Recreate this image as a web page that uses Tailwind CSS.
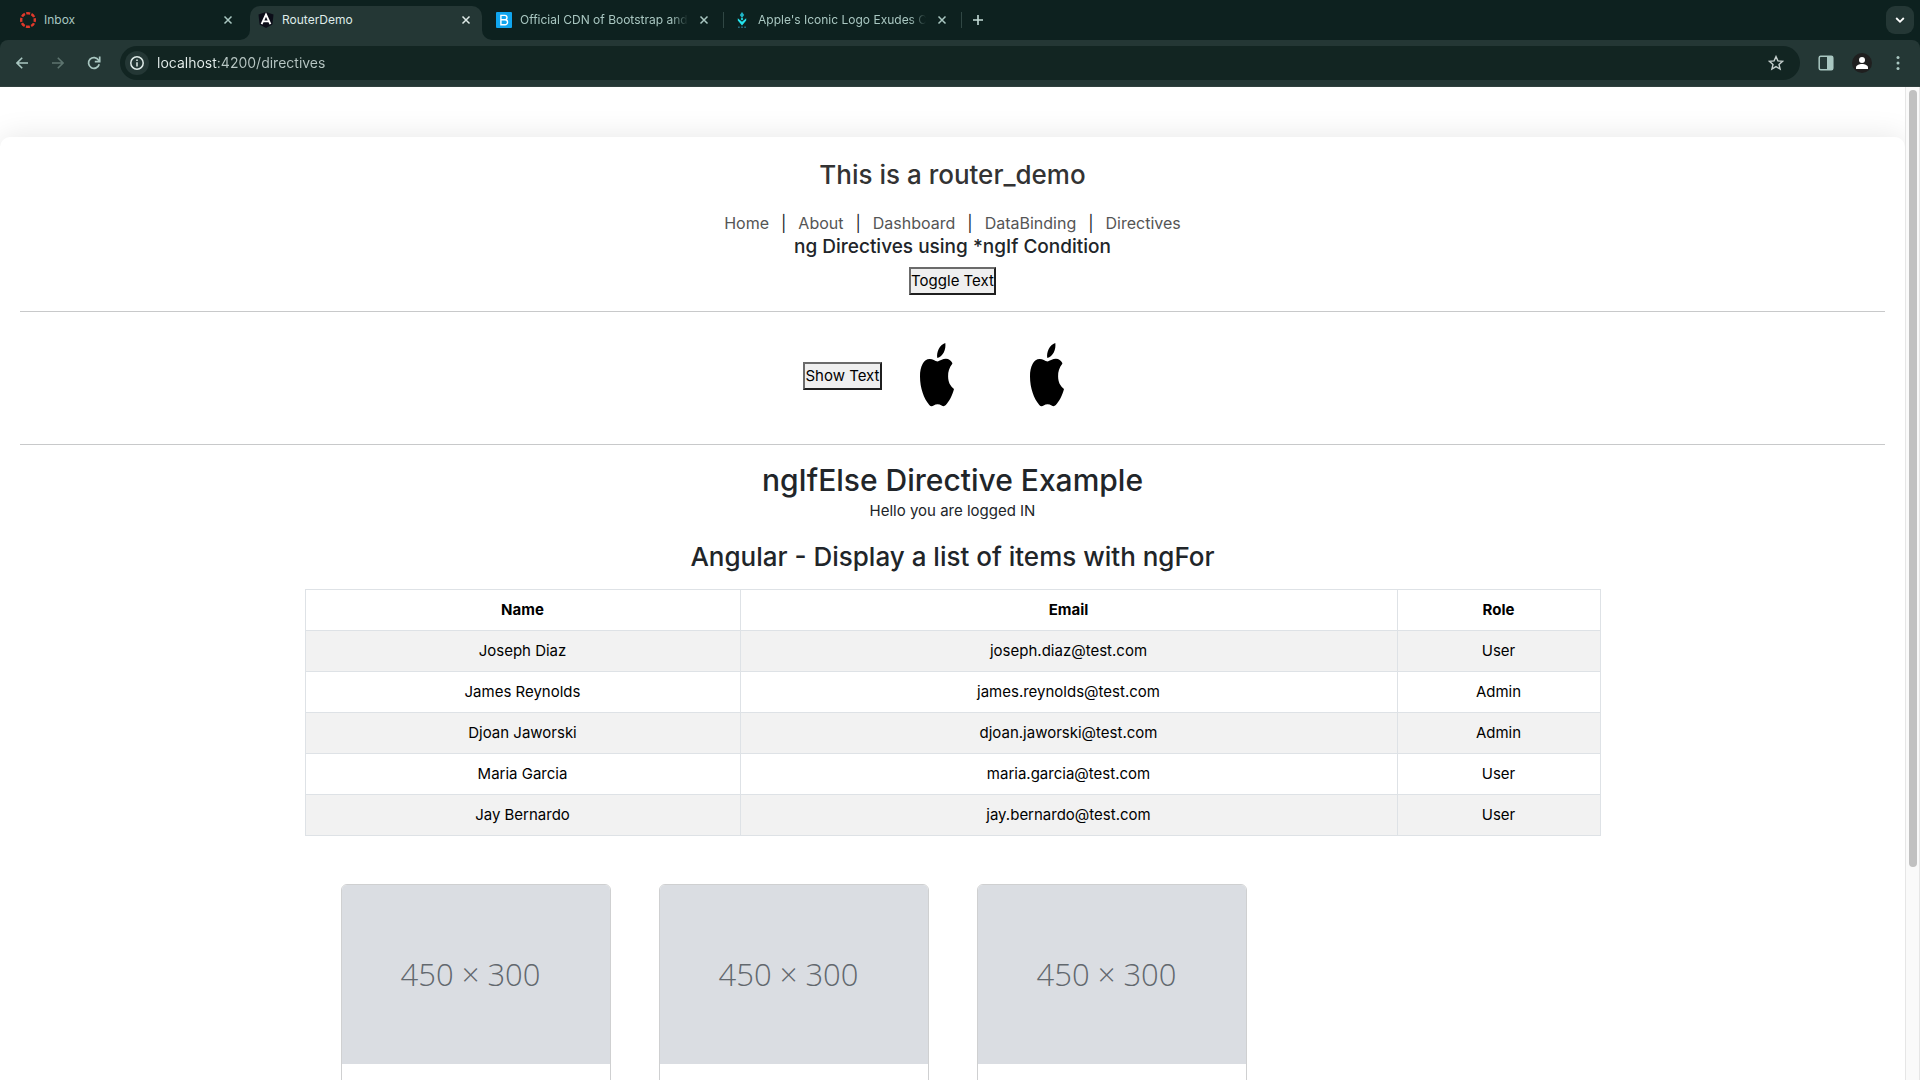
<!DOCTYPE html>
<html lang="en">
<head>
<meta charset="utf-8">
<title>RouterDemo</title>
<script src="https://cdn.jsdelivr.net/npm/@tailwindcss/browser@4"></script>
</head>
<body class="flex h-screen flex-col overflow-hidden bg-white font-['Inter',sans-serif] text-[15px] text-[#212529]">

<header class="shrink-0 bg-[#0d211f] text-[#a9c7c1]">
  <!-- Tab strip -->
  <div class="flex h-10 items-end pr-[6px] text-xs">
    <div class="flex h-[34px] w-[250px] items-center pb-[6px] pl-5 pr-[17px]">
      <svg class="size-4 shrink-0" viewBox="0 0 16 16" fill="none" stroke="#e0392b" stroke-width="2.4"><circle cx="8" cy="8" r="6.8" stroke-dasharray="4 1.34" stroke-dashoffset="2"/></svg>
      <span class="ml-2 grow">Inbox</span>
      <button aria-label="Close tab"><svg class="size-[10px]" viewBox="0 0 10 10" stroke="currentColor" stroke-width="1.5"><path d="M1.5 1.5l7 7M8.5 1.5l-7 7"/></svg></button>
    </div>
    <div class="relative flex h-[34px] w-[232px] items-center rounded-t-[10px] bg-[#243735] pb-[6px] pl-2 pr-[11px] text-[#dfebe8]">
      <svg class="absolute bottom-0 -left-[10px] size-[10px]" viewBox="0 0 10 10" fill="#243735"><path d="M10 0v10H0A10 10 0 0 0 10 0z"/></svg>
      <svg class="absolute bottom-0 -right-[10px] size-[10px]" viewBox="0 0 10 10" fill="#243735"><path d="M0 0v10h10A10 10 0 0 1 0 0z"/></svg>
      <svg class="size-4 shrink-0" viewBox="0 0 16 16"><path d="M8 0l7.5 2.6-1.1 10L8 16l-6.4-3.4-1.1-10z" fill="#0b0d18"/><path d="M3.6 12.2L8 2.6l4.4 9.6M5.4 9.4h5.2" fill="none" stroke="#fff" stroke-width="1.9"/></svg>
      <span class="ml-2 grow">RouterDemo</span>
      <button aria-label="Close tab"><svg class="size-[10px]" viewBox="0 0 10 10" stroke="currentColor" stroke-width="1.5"><path d="M1.5 1.5l7 7M8.5 1.5l-7 7"/></svg></button>
    </div>
    <div class="flex h-[34px] w-[243px] items-center pb-[6px] pl-[14px]">
      <svg class="size-4 shrink-0" viewBox="0 0 16 16"><rect width="16" height="16" rx="1" fill="#10a5ee"/><path d="M4.9 3.4h3.9a2.2 2.2 0 0 1 0 4.4H4.9zM4.9 7.8h4.2a2.4 2.4 0 0 1 0 4.9H4.9z" fill="none" stroke="#fff" stroke-width="1.4"/></svg>
      <span class="ml-2 w-[168px] overflow-hidden whitespace-nowrap mask-r-from-90%">Official CDN of Bootstrap and</span>
      <button aria-label="Close tab" class="ml-[11px]"><svg class="size-[10px]" viewBox="0 0 10 10" stroke="currentColor" stroke-width="1.5"><path d="M1.5 1.5l7 7M8.5 1.5l-7 7"/></svg></button>
      <span class="ml-[14px] h-4 w-px bg-[#304744]"></span>
    </div>
    <div class="flex h-[34px] w-[238px] items-center pb-[6px] pl-[9px]">
      <svg class="size-4 shrink-0" viewBox="0 0 16 16" fill="none"><path d="M8 0l2.2 3L8 6 5.800 3z" fill="#1fb5c6"/><path d="M3.800 6.200L8 9.800l4.200-3.600v2.300L8 13.500 3.800 8.500zM8 5.400l1.300 1.500L8 8.400 6.700 6.900z" fill="#24e4ee"/><path d="M4.200 15.200h1.400M7.300 15.200h1.400M10.400 15.200h1.400" stroke="#2b7f97" stroke-width="1.500"/></svg>
      <span class="ml-2 w-[168px] overflow-hidden whitespace-nowrap mask-r-from-90%">Apple's Iconic Logo Exudes Class</span>
      <button aria-label="Close tab" class="ml-[11px]"><svg class="size-[10px]" viewBox="0 0 10 10" stroke="currentColor" stroke-width="1.5"><path d="M1.5 1.500l7 7M8.500 1.500l-7 7"/></svg></button>
      <span class="ml-[14px] h-4 w-px bg-[#304744]"></span>
    </div>
    <div class="flex h-[34px] grow items-center pb-[6px] pl-[9px]">
      <button aria-label="New tab"><svg class="size-3" viewBox="0 0 12 12" stroke="#c3dbd6" stroke-width="1.600"><path d="M6 1v10M1 6h10"/></svg></button>
    </div>
    <button aria-label="Search tabs" class="mb-[6px] grid size-7 place-items-center rounded-[9px] bg-[#243735] text-white"><svg class="size-[10px]" viewBox="0 0 10 10" fill="none" stroke="currentColor" stroke-width="1.800"><path d="M1.200 3L5 6.800 8.800 3"/></svg></button>
  </div>
  <!-- Toolbar -->
  <div class="flex h-[47px] items-center rounded-t-[8px] border-b border-[#30403e] bg-[#243735] pl-4 pr-[14px]">
    <button aria-label="Back"><svg class="size-3" viewBox="0 0 12 12" fill="none" stroke="currentColor" stroke-width="1.600"><path d="M12 6H1.200M6.200 .8L1 6l5.200 5.200"/></svg></button>
    <button aria-label="Forward" class="ml-6 text-[#5d746f]"><svg class="size-3" viewBox="0 0 12 12" fill="none" stroke="currentColor" stroke-width="1.600"><path d="M0 6h10.800M5.800 .8L11 6l-5.200 5.200"/></svg></button>
    <button aria-label="Reload" class="ml-[23px]"><svg class="size-[14px]" viewBox="0 0 14 14" fill="none" stroke="currentColor" stroke-width="1.700"><path d="M12.200 8.200A5.400 5.400 0 1 1 11.600 4.200L12.600 5.500"/><path d="M12.700 .6v5H7.800"/></svg></button>
    <div class="ml-[19px] flex h-[34px] grow items-center rounded-full bg-[#122522] pl-[5px] pr-4">
      <button aria-label="Site information" class="grid size-6 place-items-center rounded-full bg-[#243735] text-[#dfebe8]"><svg class="size-[14px]" viewBox="0 0 14 14" fill="none" stroke="currentColor" stroke-width="1.500"><circle cx="7" cy="7" r="6.200"/><path d="M7 6.200v4.200M7 3.500v1.600"/></svg></button>
      <input type="text" aria-label="Address" value="localhost:4200/directives" class="ml-2 grow bg-[linear-gradient(90deg,#e6efed_61px,#b8c7c4_61px)] bg-clip-text text-sm text-transparent caret-white outline-none">
      <button aria-label="Bookmark" class="text-[#c5cfcd]"><svg class="size-4" viewBox="0 0 16 16" fill="none" stroke="currentColor" stroke-width="1.400"><path d="M8 1.600l1.900 4.300 4.700.4-3.600 3.100 1.100 4.600L8 11.600 3.900 14 5 9.400 1.400 6.300l4.700-.4z"/></svg></button>
    </div>
    <button aria-label="Side panel" class="ml-[18px]"><svg class="size-4" viewBox="0 0 16 16"><rect x="1.200" y="1.200" width="13.600" height="13.600" rx="1.500" fill="none" stroke="currentColor" stroke-width="1.500"/><path d="M9 1h6v14H9z" fill="currentColor"/></svg></button>
    <button aria-label="Profile" class="ml-[18px]"><svg class="size-5" viewBox="0 0 20 20"><circle cx="10" cy="10" r="10" fill="#1f1f1f"/><circle cx="10" cy="7" r="3" fill="#fff"/><path d="M4 16v-1.500c0-2.200 3-3.500 6-3.500s6 1.300 6 3.500V16z" fill="#fff"/></svg></button>
    <button aria-label="Menu" class="ml-[18px]"><svg class="size-4" viewBox="0 0 16 16" fill="currentColor"><circle cx="8" cy="2.500" r="1.500"/><circle cx="8" cy="8" r="1.500"/><circle cx="8" cy="13.500" r="1.500"/></svg></button>
  </div>
</header>

<div class="flex min-h-0 grow">
  <main class="grow overflow-hidden pt-[50px]">
    <div class="min-h-full rounded-t-[10px] bg-white px-5 pt-5 text-center shadow-[0_0_30px_rgba(0,0,0,0.1)]">
      <h1 class="text-[26px] font-medium leading-9 text-[#333]">This is a router_demo</h1>
      <nav class="mt-[18px] flex justify-center gap-3 text-base leading-6 text-[#212529]">
        <a href="#" class="text-[#555]">Home</a><span>|</span>
        <a href="#" class="text-[#555]">About</a><span>|</span>
        <a href="#" class="text-[#555]">Dashboard</a><span>|</span>
        <a href="#" class="text-[#555]">DataBinding</a><span>|</span>
        <a href="#" class="text-[#555]">Directives</a>
      </nav>
      <h2 class="text-[19px] font-medium leading-6">ng Directives using *ngIf Condition</h2>
      <button class="mt-2 h-7 border-2 border-t-[#6b6b6b] border-l-[#6b6b6b] border-r-[#1f1f1f] border-b-[#1f1f1f] bg-[#efefef] leading-6 text-black">Toggle Text</button>
      <hr class="mt-4 border-[#c8c9ca]">
      <div class="flex h-[132px] items-start justify-center pr-[38px]">
        <button class="mt-[50px] h-7 border-2 border-t-[#6b6b6b] border-l-[#6b6b6b] border-r-[#1f1f1f] border-b-[#1f1f1f] bg-[#efefef] leading-6 text-black">Show Text</button>
        <svg class="ml-[38px] mt-[31px] h-16 w-[34px]" viewBox="0 0 34 64" role="img" aria-label="Apple"><path d="M25.300 0C26.200 6.500 23 13.500 17.300 15 16.300 9 19.500 2 25.300 0zM17.700 18.400C21 17.600 22.700 15.700 26 15.800c2.800.1 5 1.700 6.300 4.200v.8c-3.200 4-4.300 8.200-4.200 12.500.1 6 1.900 9.500 5.900 12.700-1.500 6.200-4.800 12.400-8.200 16-1.200 1.300-2.700 1.500-4.200.5-2.500-1.700-5.500-1.700-8 0-1.600 1.200-3.100 1-4.300-.6C3.800 55.500 0 45 0 33.500 0 23 3.700 16 9.700 15.900c3.100 0 5.200 2 8 2.500z"/></svg>
        <svg class="ml-[76px] mt-[31px] h-16 w-[34px]" viewBox="0 0 34 64" role="img" aria-label="Apple"><path d="M25.300 0C26.200 6.500 23 13.500 17.300 15 16.300 9 19.500 2 25.300 0zM17.700 18.400C21 17.600 22.700 15.700 26 15.800c2.800.1 5 1.700 6.300 4.200v.8c-3.200 4-4.300 8.200-4.200 12.500.1 6 1.900 9.500 5.900 12.700-1.500 6.200-4.800 12.400-8.200 16-1.200 1.300-2.700 1.500-4.200.5-2.500-1.700-5.500-1.700-8 0-1.600 1.200-3.100 1-4.300-.6C3.800 55.500 0 45 0 33.500 0 23 3.700 16 9.700 15.900c3.100 0 5.200 2 8 2.500z"/></svg>
      </div>
      <hr class="border-[#c8c9ca]">
      <h2 class="mt-4 text-[30px] font-medium leading-[38px]">ngIfElse Directive Example</h2>
      <p class="leading-6">Hello you are logged IN</p>
      <div class="mx-auto max-w-[1320px] px-3 pt-4">
        <h2 class="text-[26px] font-medium leading-9">Angular - Display a list of items with ngFor</h2>
        <table class="mt-[14px] w-full table-fixed border-collapse leading-6 text-black [&_td]:border [&_td]:border-[#dee2e6] [&_td]:p-2 [&_th]:border [&_th]:border-[#dee2e6] [&_th]:p-2 [&_th]:font-bold">
          <colgroup><col class="w-[435px]"><col><col class="w-[203px]"></colgroup>
          <thead><tr><th>Name</th><th>Email</th><th>Role</th></tr></thead>
          <tbody class="[&>tr:nth-child(odd)]:bg-[#f2f2f2]">
            <tr><td>Joseph Diaz</td><td>joseph.diaz@test.com</td><td>User</td></tr>
            <tr><td>James Reynolds</td><td>james.reynolds@test.com</td><td>Admin</td></tr>
            <tr><td>Djoan Jaworski</td><td>djoan.jaworski@test.com</td><td>Admin</td></tr>
            <tr><td>Maria Garcia</td><td>maria.garcia@test.com</td><td>User</td></tr>
            <tr><td>Jay Bernardo</td><td>jay.bernardo@test.com</td><td>User</td></tr>
          </tbody>
        </table>
      </div>
      <section class="mx-auto mt-12 grid max-w-[1320px] grid-cols-4 gap-12 px-12 font-['Open_Sans',sans-serif] text-[31px] font-light text-[#62686e]">
        <article class="h-80 overflow-hidden rounded-md border border-[#cfd0d1]"><div class="flex aspect-[3/2] items-center justify-center bg-[#dadde2] pr-[10px]">450 × 300</div></article>
        <article class="h-80 overflow-hidden rounded-md border border-[#cfd0d1]"><div class="flex aspect-[3/2] items-center justify-center bg-[#dadde2] pr-[10px]">450 × 300</div></article>
        <article class="h-80 overflow-hidden rounded-md border border-[#cfd0d1]"><div class="flex aspect-[3/2] items-center justify-center bg-[#dadde2] pr-[10px]">450 × 300</div></article>
      </section>
    </div>
  </main>
  <!-- Scrollbar -->
  <div class="relative z-10 w-[15px] shrink-0 border-x border-[#e6e6e6] bg-[#fafafa] px-[3px] pt-[3px]">
    <div class="h-[78.5%] w-2 rounded-full bg-[#c1c1c1]"></div>
  </div>
</div>
</body>
</html>
